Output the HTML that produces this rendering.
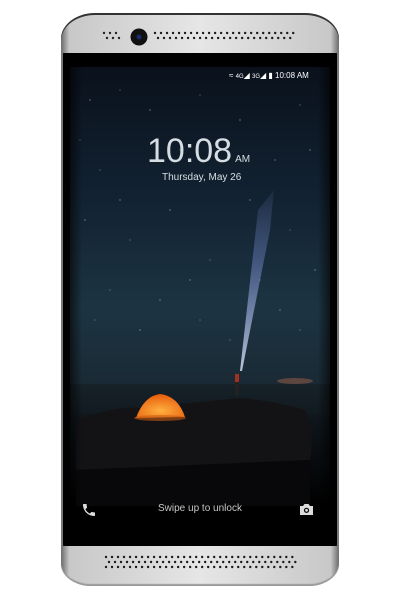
<!DOCTYPE html>
<html><head><meta charset="utf-8"><style>
html,body{margin:0;padding:0;background:#fff;width:400px;height:600px;overflow:hidden;font-family:"Liberation Sans",sans-serif}
.abs{position:absolute}
</style></head><body>
<div class="abs" style="left:61px;top:13px;width:278px;height:573px;border-radius:34px 34px 30px 30px/26px 26px 22px 22px;background:linear-gradient(90deg,#6a6a6a,#c8c8c8 3%,#e6e6e6 50%,#c8c8c8 97%,#6a6a6a);box-shadow:inset 0 2px 0 #333,inset 0 -2px 1px #999"></div>
<div class="abs" style="left:63px;top:53px;width:274px;height:493px;background:#000;border-radius:3px"></div>
<svg class="abs" style="left:0;top:0" width="400" height="600">
<defs>
<linearGradient id="sky" x1="0" y1="0" x2="0" y2="1">
<stop offset="0" stop-color="#0a111c"/><stop offset="0.3" stop-color="#122232"/><stop offset="0.55" stop-color="#1c3442"/><stop offset="0.72" stop-color="#1a2a35"/><stop offset="0.8" stop-color="#0f161c"/><stop offset="1" stop-color="#000"/></linearGradient>
<linearGradient id="beam" x1="0" y1="1" x2="0" y2="0"><stop offset="0" stop-color="#dfe8ff" stop-opacity="0.95"/><stop offset="0.6" stop-color="#7b8fd8" stop-opacity="0.5"/><stop offset="1" stop-color="#7b8fd8" stop-opacity="0.1"/></linearGradient>
<radialGradient id="tent" cx="0.5" cy="0.7" r="0.7"><stop offset="0" stop-color="#ffb040"/><stop offset="1" stop-color="#e65a0a"/></radialGradient>
<linearGradient id="side" x1="0" y1="0" x2="1" y2="0"><stop offset="0" stop-color="#000" stop-opacity="0.9"/><stop offset="0.07" stop-color="#000" stop-opacity="0"/><stop offset="0.93" stop-color="#000" stop-opacity="0"/><stop offset="1" stop-color="#000" stop-opacity="0.9"/></linearGradient>
</defs>
<rect x="70" y="66" width="260" height="440" fill="url(#sky)"/>
<g fill="#fff" opacity="0.6">
<circle cx="90" cy="100" r=".6"/><circle cx="120" cy="90" r=".5"/><circle cx="150" cy="110" r=".6"/><circle cx="200" cy="95" r=".5"/><circle cx="240" cy="120" r=".6"/><circle cx="300" cy="105" r=".5"/><circle cx="310" cy="150" r=".6"/><circle cx="100" cy="170" r=".5"/><circle cx="85" cy="220" r=".6"/><circle cx="130" cy="240" r=".5"/><circle cx="170" cy="210" r=".6"/><circle cx="210" cy="260" r=".5"/><circle cx="250" cy="200" r=".6"/><circle cx="290" cy="230" r=".5"/><circle cx="315" cy="270" r=".6"/><circle cx="110" cy="290" r=".5"/><circle cx="160" cy="300" r=".6"/><circle cx="200" cy="320" r=".5"/><circle cx="280" cy="310" r=".6"/><circle cx="300" cy="330" r=".5"/><circle cx="95" cy="320" r=".5"/><circle cx="140" cy="330" r=".6"/><circle cx="230" cy="340" r=".5"/><circle cx="180" cy="150" r=".5"/><circle cx="275" cy="160" r=".6"/><circle cx="225" cy="180" r=".5"/><circle cx="120" cy="200" r=".6"/><circle cx="260" cy="280" r=".5"/><circle cx="190" cy="280" r=".6"/><circle cx="80" cy="140" r=".5"/>
</g>
<polygon points="240,371 242,371 270,230 274,190 258,210" fill="url(#beam)" opacity="0.85"/>
<ellipse cx="295" cy="381" rx="18" ry="3" fill="#c07050" opacity="0.4"/>
<rect x="70" y="384" width="260" height="30" fill="#141c22" opacity="0.6"/>
<path d="M76,420 Q120,405 140,408 L240,398 Q270,400 305,410 Q315,430 310,460 L76,470 Z" fill="#131316"/>
<path d="M76,470 L310,460 L310,506 L76,506 Z" fill="#08080a"/>
<rect x="235" y="374" width="4" height="22" fill="#222"/><rect x="235" y="374" width="4" height="8" fill="#a03020"/>
<path d="M136,418 Q144,396 160,394 Q178,396 185,417 Z" fill="url(#tent)"/>
<ellipse cx="160" cy="418" rx="26" ry="3" fill="#c85a10" opacity="0.6"/>
<rect x="63" y="53" width="274" height="493" fill="url(#side)"/>
<rect x="63" y="53" width="274" height="14" fill="#000"/>
<g fill="#222">
<circle cx="104" cy="33" r="1.2"/><circle cx="110" cy="33" r="1.2"/><circle cx="116" cy="33" r="1.2"/><circle cx="107" cy="38" r="1.2"/><circle cx="113" cy="38" r="1.2"/><circle cx="119" cy="38" r="1.2"/>
</g>
<circle cx="139" cy="37" r="8.5" fill="#111"/><circle cx="139" cy="37" r="2.5" fill="#1b2a6a"/>
<g stroke="#1a1a1a" stroke-width="2.4" stroke-dasharray="0.01 6" stroke-linecap="round">
<line x1="155" y1="33" x2="296" y2="33"/><line x1="158" y1="38" x2="296" y2="38"/>
<line x1="106" y1="557" x2="296" y2="557"/><line x1="109" y1="562" x2="296" y2="562"/><line x1="106" y1="567" x2="296" y2="567"/>
</g>
</svg>
<div class="abs" style="left:229px;top:71px;color:#fff;font-size:8px;white-space:nowrap">≈ <span style="font-size:6px">4G</span>◢ <span style="font-size:6px">3G</span>◢ ▮ 10:08 AM</div>
<div class="abs" style="left:147px;top:134px;color:#d6dde2;font-size:34px;line-height:34px;white-space:nowrap">10:08<span style="font-size:10px;margin-left:3px">AM</span></div>
<div class="abs" style="left:162px;top:172px;color:#d8dee2;font-size:10px;white-space:nowrap">Thursday, May 26</div>
<div class="abs" style="left:158px;top:503px;color:#c8c8c8;font-size:10px;white-space:nowrap">Swipe up to unlock</div>
<svg class="abs" style="left:81px;top:502px" width="16" height="16" viewBox="0 0 24 24"><path d="M6.6 10.8c1.4 2.8 3.8 5.1 6.6 6.6l2.2-2.2c.3-.3.7-.4 1-.2 1.1.4 2.3.6 3.6.6.6 0 1 .4 1 1V20c0 .6-.4 1-1 1C10.6 21 3 13.4 3 4c0-.6.4-1 1-1h3.5c.6 0 1 .4 1 1 0 1.3.2 2.5.6 3.6.1.3 0 .7-.2 1z" fill="#ddd"/></svg>
<svg class="abs" style="left:299px;top:503px" width="15" height="13" viewBox="0 0 15 13"><path d="M1 3h3l1.5-2h4L11 3h3v9H1z" fill="#ddd"/><circle cx="7.5" cy="7.3" r="2.6" fill="#000"/><circle cx="7.5" cy="7.3" r="1.4" fill="#ddd"/></svg>
</body></html>
